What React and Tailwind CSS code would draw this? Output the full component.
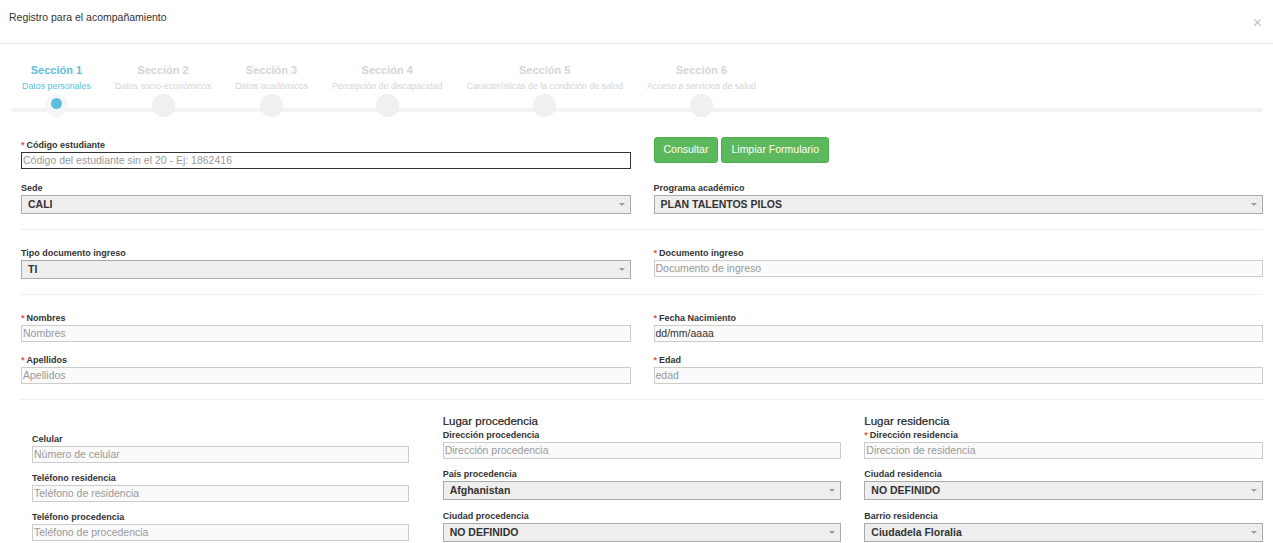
import { X } from 'lucide-react'

const STEPS = [
  { title: 'Sección 1', sub: 'Datos personales', active: true },
  { title: 'Sección 2', sub: 'Datos socio-económicos' },
  { title: 'Sección 3', sub: 'Datos académicos' },
  { title: 'Sección 4', sub: 'Percepción de discapacidad' },
  { title: 'Sección 5', sub: 'Características de la condición de salud' },
  { title: 'Sección 6', sub: 'Acceso a servicios de salud' },
]

function Label({ children, req, className = '' }) {
  return (
    <div className={`text-[9px] leading-[12px] font-bold text-[#333] ${className}`}>
      {req && <span className="text-[#d9534f] mr-[2px]">*</span>}
      {children}
    </div>
  )
}

function TextInput({ placeholder, value, dark }) {
  return (
    <div className={`h-[17px] border flex items-center px-[1px] text-[10.5px] leading-none ${dark ? 'border-[#333] bg-white' : 'border-[#ccc] bg-[#fafafa]'}`}>
      {value
        ? <span className="text-[#333]">{value}</span>
        : <span className="text-[#999]">{placeholder}</span>}
    </div>
  )
}

function Select({ value }) {
  return (
    <div className="h-[19px] border border-[#aaa] bg-[#eee] flex items-center pl-[6px] pr-[5px] text-[10.5px] font-bold text-[#333]">
      <span className="flex-1">{value}</span>
      <span className="w-0 h-0 border-l-[3px] border-r-[3px] border-t-[3px] border-l-transparent border-r-transparent border-t-[#999]" />
    </div>
  )
}

function Field({ label, req, children, className = '' }) {
  return (
    <div className={className}>
      <Label req={req} className="mb-[1px]">{label}</Label>
      {children}
    </div>
  )
}

export default function App() {
  return (
    <div className="w-[1273px] h-[543px] overflow-hidden bg-white text-[#333]" style={{ fontFamily: '"Liberation Sans", Arial, sans-serif' }}>
      {/* header */}
      <div className="h-[44px] border-b border-[#e5e5e5] flex items-start justify-between pl-[9px] pr-[10px]">
        <h4 className="text-[10.5px] leading-[13px] mt-[11px] text-[#333]">Registro para el acompañamiento</h4>
        <X className="w-[11px] h-[11px] mt-[17px] text-[#c4c4c4]" strokeWidth={3} />
      </div>

      {/* stepper */}
      <div className="relative ml-[11px] mr-[10px] pt-[20px] h-[83px]">
        <div className="absolute left-0 right-0 top-[64px] h-[4px] rounded-full bg-[#f3f3f3]" />
        <div className="relative flex">
          {STEPS.map((s, i) => (
            <div key={i} className="px-[12px] flex flex-col items-center first:pl-[11px]">
              <div className={`text-[11px] leading-[13px] font-bold ${s.active ? 'text-[#5bc0de]' : 'text-[#d5d5d5]'}`}>{s.title}</div>
              <div className={`text-[8.85px] leading-[12px] mt-[3px] whitespace-nowrap ${s.active ? 'text-[#5bc0de]' : 'text-[#d5d5d5]'}`}>{s.sub}</div>
              <div className={`w-[23px] h-[23px] rounded-full mt-[2px] flex items-center justify-center ${s.active ? 'bg-[#f6f6f6]' : 'bg-[#f0f0f0]'}`}>
                {s.active && <div className="w-[11px] h-[11px] rounded-full bg-[#5bc0de] -mt-[4px]" />}
              </div>
            </div>
          ))}
        </div>
      </div>

      {/* form */}
      <div className="pl-[21px] pr-[10px] pt-[10px]">
        <div className="grid grid-cols-2 gap-x-[23px] items-start">
          <Field label="Código estudiante" req className="pt-[2px]">
            <TextInput dark placeholder="Código del estudiante sin el 20 - Ej: 1862416" />
          </Field>
          <div className="flex gap-[3px]">
            <button className="h-[26px] px-[9px] rounded-[3px] bg-[#5cb85c] border border-[#4cae4c] text-white text-[10.5px]">Consultar</button>
            <button className="h-[26px] px-[9px] rounded-[3px] bg-[#5cb85c] border border-[#4cae4c] text-white text-[10.5px]">Limpiar Formulario</button>
          </div>
        </div>

        <div className="grid grid-cols-2 gap-x-[23px] mt-[13px]">
          <Field label="Sede"><Select value="CALI" /></Field>
          <Field label="Programa académico"><Select value="PLAN TALENTOS PILOS" /></Field>
        </div>

        <div className="border-t border-[#eee] mt-[15px]" />

        <div className="grid grid-cols-2 gap-x-[23px] mt-[17px]">
          <Field label="Tipo documento ingreso"><Select value="TI" /></Field>
          <Field label="Documento ingreso" req><TextInput placeholder="Documento de ingreso" /></Field>
        </div>

        <div className="border-t border-[#eee] mt-[15px]" />

        <div className="grid grid-cols-2 gap-x-[23px] gap-y-[12px] mt-[17px]">
          <Field label="Nombres" req><TextInput placeholder="Nombres" /></Field>
          <Field label="Fecha Nacimiento" req><TextInput value="dd/mm/aaaa" /></Field>
          <Field label="Apellidos" req><TextInput placeholder="Apellidos" /></Field>
          <Field label="Edad" req><TextInput placeholder="edad" /></Field>
        </div>

        <div className="border-t border-[#eee] mt-[15px]" />

        <div className="grid grid-cols-3 gap-x-[23px] mt-[14px]">
          <div className="px-[11px] pt-[19px] flex flex-col gap-[9px]">
            <Field label="Celular"><TextInput placeholder="Número de celular" /></Field>
            <Field label="Teléfono residencia"><TextInput placeholder="Teléfono de residencia" /></Field>
            <Field label="Teléfono procedencia"><TextInput placeholder="Teléfono de procedencia" /></Field>
          </div>
          <div className="flex flex-col">
            <div className="text-[11.5px] leading-[14px] text-[#222] [-webkit-text-stroke:0.2px]">Lugar procedencia</div>
            <Field label="Dirección procedencia" className="mt-[1px]"><TextInput placeholder="Dirección procedencia" /></Field>
            <Field label="País procedencia" className="mt-[9px]"><Select value="Afghanistan" /></Field>
            <Field label="Ciudad procedencia" className="mt-[10px]"><Select value="NO DEFINIDO" /></Field>
          </div>
          <div className="flex flex-col">
            <div className="text-[11.5px] leading-[14px] text-[#222] [-webkit-text-stroke:0.2px]">Lugar residencia</div>
            <Field label="Dirección residencia" req className="mt-[1px]"><TextInput placeholder="Direccion de residencia" /></Field>
            <Field label="Ciudad residencia" className="mt-[9px]"><Select value="NO DEFINIDO" /></Field>
            <Field label="Barrio residencia" className="mt-[10px]"><Select value="Ciudadela Floralia" /></Field>
          </div>
        </div>
      </div>
    </div>
  )
}
